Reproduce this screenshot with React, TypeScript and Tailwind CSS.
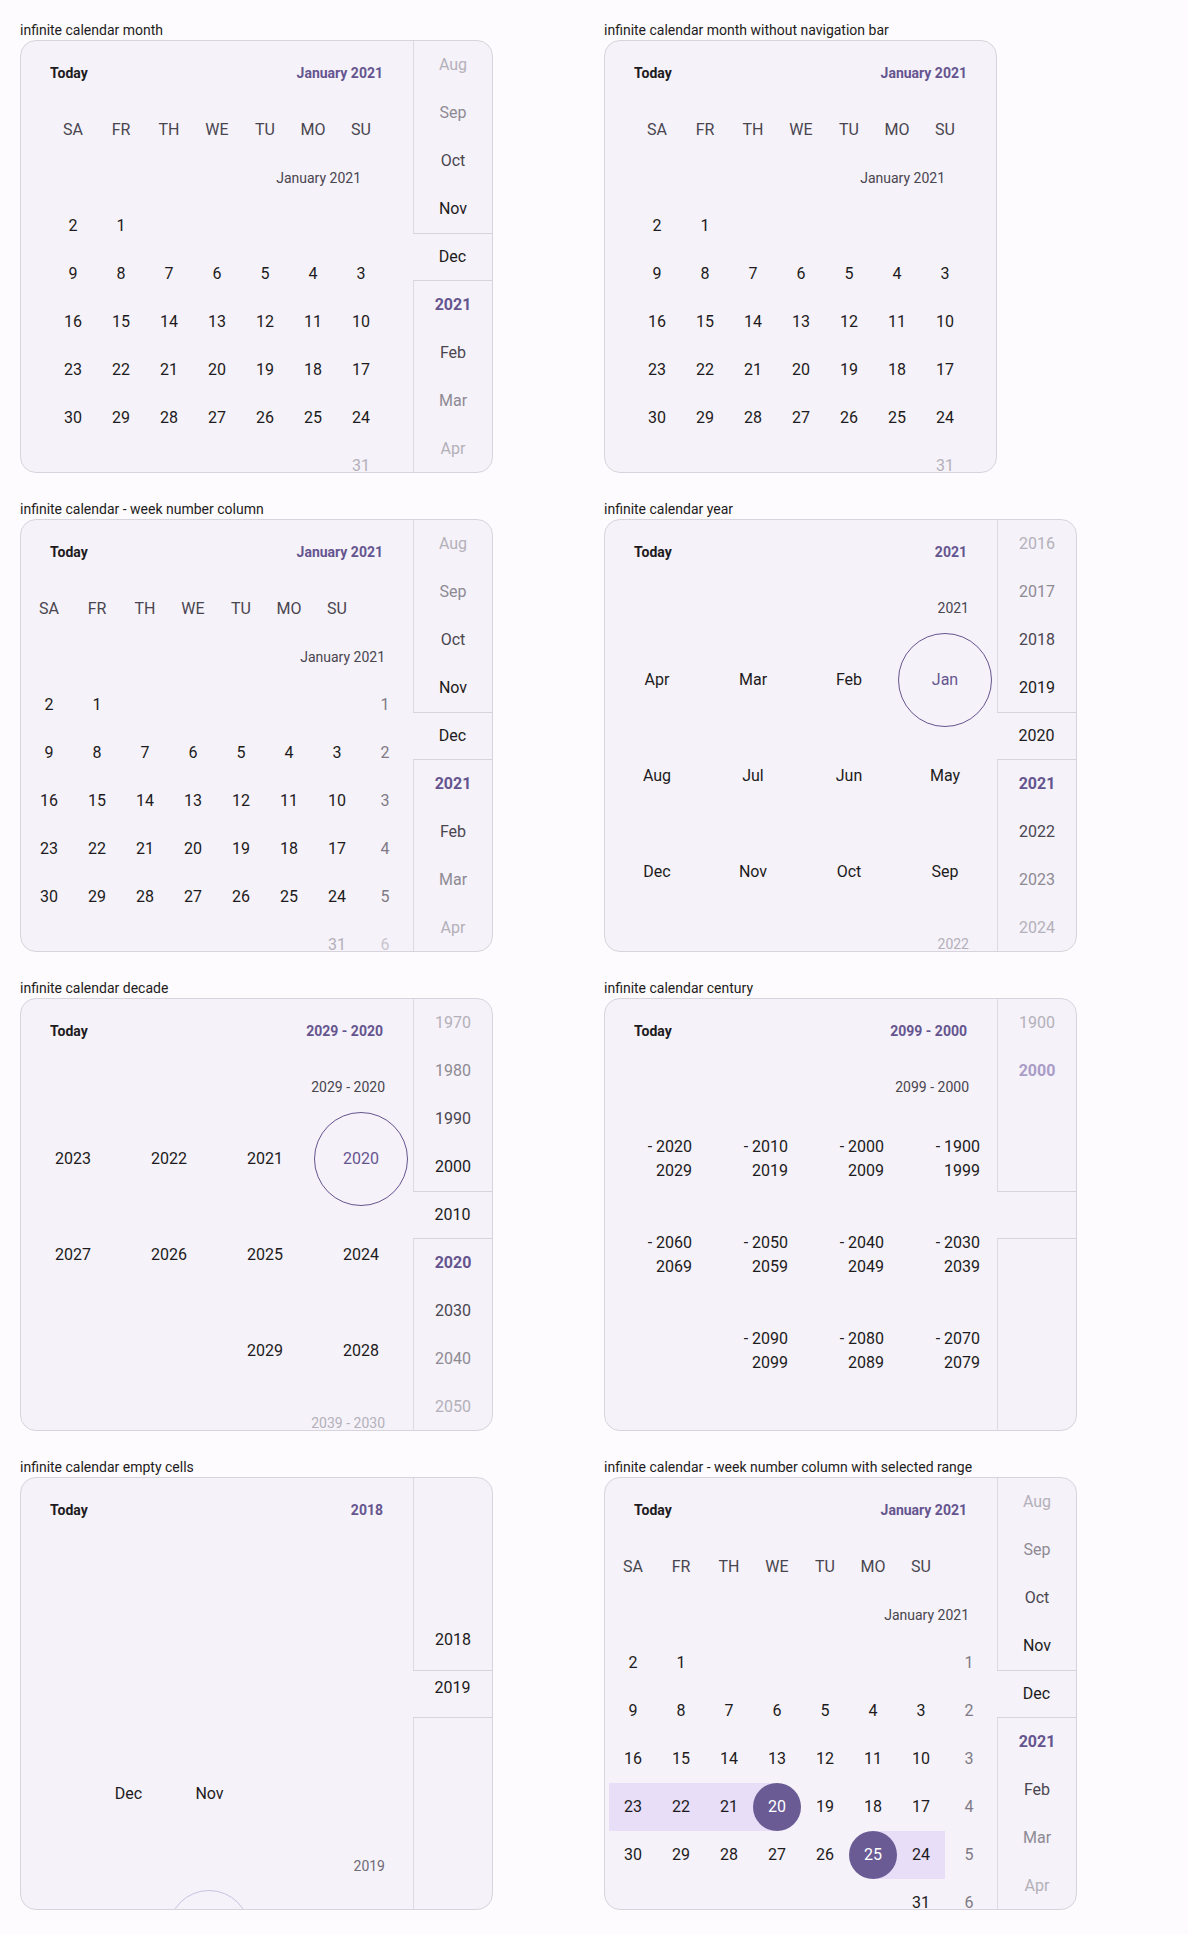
import React from 'react';

type Tone = 'l1' | 'l2' | 'l3' | 'd' | 'p' | 'pf' | 'none';
type NavItem = { label: string; tone: Tone };

const toneClass: Record<Tone, string> = {
  l1: 'text-[#b4b0b9]',
  l2: 'text-[#8e8a93]',
  l3: 'text-[#4a4650]',
  d: 'text-[#1d1b20]',
  p: 'text-[#65558f] font-bold',
  pf: 'text-[#a99cc7] font-bold',
  none: '',
};

function Nav({ items, highlight, shift }: { items: NavItem[]; highlight: number; shift?: boolean }) {
  return (
    <div className="flex w-[79px] shrink-0 flex-col">
      {items.map((it, i) => (
        <div
          key={i}
          className={
            'flex h-[48px] shrink-0 items-center justify-center text-[16px] ' +
            (i === highlight ? 'border-y border-[#d8d4dd] ' : 'border-l border-[#dedae3] ') +
            (shift ? 'pb-[12px] ' : '') +
            toneClass[it.tone]
          }
        >
          {it.label}
        </div>
      ))}
      <div className="flex-1 border-l border-[#dedae3]" />
    </div>
  );
}

function Card({ nav, children }: { nav?: React.ReactNode; children: React.ReactNode }) {
  return (
    <div
      className={
        'flex h-[433px] overflow-hidden rounded-2xl border border-[#d8d4dd] bg-[#f5f2f9] ' +
        (nav ? 'w-[473px]' : 'w-[393px]')
      }
    >
      <div className="flex w-[392px] shrink-0 flex-col">{children}</div>
      {nav}
    </div>
  );
}

function Header({ title }: { title: string }) {
  return (
    <div className="flex h-[64px] shrink-0 items-center justify-between pl-[29px] pr-[30px] text-[14px] font-bold">
      <span className="text-[#1d1b20]">Today</span>
      <span className="text-[#65558f]">{title}</span>
    </div>
  );
}

function Block({ title, children }: { title: string; children: React.ReactNode }) {
  return (
    <div>
      <div className="h-[20px] text-[14px] leading-[20px] text-[#1d1b20]">{title}</div>
      {children}
    </div>
  );
}

const monthNav: NavItem[] = [
  { label: 'Aug', tone: 'l1' },
  { label: 'Sep', tone: 'l2' },
  { label: 'Oct', tone: 'l3' },
  { label: 'Nov', tone: 'd' },
  { label: 'Dec', tone: 'd' },
  { label: '2021', tone: 'p' },
  { label: 'Feb', tone: 'l3' },
  { label: 'Mar', tone: 'l2' },
  { label: 'Apr', tone: 'l1' },
];

const yearNav: NavItem[] = [
  { label: '2016', tone: 'l1' },
  { label: '2017', tone: 'l2' },
  { label: '2018', tone: 'l3' },
  { label: '2019', tone: 'd' },
  { label: '2020', tone: 'd' },
  { label: '2021', tone: 'p' },
  { label: '2022', tone: 'l3' },
  { label: '2023', tone: 'l2' },
  { label: '2024', tone: 'l1' },
];

const decadeNav: NavItem[] = [
  { label: '1970', tone: 'l1' },
  { label: '1980', tone: 'l2' },
  { label: '1990', tone: 'l3' },
  { label: '2000', tone: 'd' },
  { label: '2010', tone: 'd' },
  { label: '2020', tone: 'p' },
  { label: '2030', tone: 'l3' },
  { label: '2040', tone: 'l2' },
  { label: '2050', tone: 'l1' },
];

const centuryNav: NavItem[] = [
  { label: '1900', tone: 'l1' },
  { label: '2000', tone: 'pf' },
  { label: '', tone: 'none' },
  { label: '', tone: 'none' },
  { label: '', tone: 'none' },
];

const emptyNav: NavItem[] = [
  { label: '', tone: 'none' },
  { label: '', tone: 'none' },
  { label: '', tone: 'none' },
  { label: '2018', tone: 'd' },
  { label: '2019', tone: 'd' },
];

const weekdays = ['SA', 'FR', 'TH', 'WE', 'TU', 'MO', 'SU'];

const dayRows: string[][] = [
  ['2', '1', '', '', '', '', ''],
  ['9', '8', '7', '6', '5', '4', '3'],
  ['16', '15', '14', '13', '12', '11', '10'],
  ['23', '22', '21', '20', '19', '18', '17'],
  ['30', '29', '28', '27', '26', '25', '24'],
];

type Band = 'none' | 'full' | 'left' | 'right';

function DayCell({ label, band = 'none', selected, className }: { label: string; band?: Band; selected?: boolean; className?: string }) {
  const bandClass =
    band === 'full'
      ? 'bg-[#e8def8]'
      : band === 'left'
        ? 'bg-[linear-gradient(90deg,#e8def8_50%,transparent_50%)]'
        : band === 'right'
          ? 'bg-[linear-gradient(90deg,transparent_50%,#e8def8_50%)]'
          : '';
  return (
    <div className={'flex h-[48px] w-[48px] items-center justify-center text-[16px] ' + bandClass}>
      {selected ? (
        <div className="flex h-[48px] w-[48px] items-center justify-center rounded-full bg-[#6b5b95] text-white">{label}</div>
      ) : (
        <span className={className ?? 'text-[#1d1b20]'}>{label}</span>
      )}
    </div>
  );
}

function MonthView({ weekCol, range, fadeLast }: { weekCol?: boolean; range?: boolean; fadeLast?: boolean }) {
  const lastDayClass = fadeLast ? 'text-[#b4b0b9]' : 'text-[#1d1b20]';
  const bandFor = (r: number, c: number): Band => {
    if (!range) return 'none';
    if (r === 3 && c < 3) return 'full';
    if (r === 3 && c === 3) return 'left';
    if (r === 4 && c === 6) return 'full';
    if (r === 4 && c === 5) return 'right';
    return 'none';
  };
  const isSel = (r: number, c: number) => !!range && ((r === 3 && c === 3) || (r === 4 && c === 5));
  return (
    <>
      <Header title="January 2021" />
      <div className="h-[1px] shrink-0" />
      <div className={'mx-auto ' + (weekCol ? 'w-[384px]' : 'w-[336px]')}>
        <div className="flex h-[48px]">
          {weekdays.map((d) => (
            <div key={d} className="flex h-[48px] w-[48px] items-center justify-center text-[16px] text-[#49454f]">
              {d}
            </div>
          ))}
        </div>
        <div className="flex h-[48px] items-center justify-end pr-[24px] text-[14px] text-[#49454f]">January 2021</div>
        {dayRows.map((row, r) => (
          <div key={r} className="flex h-[48px]">
            {row.map((d, c) => (
              <DayCell key={c} label={d} band={bandFor(r, c)} selected={isSel(r, c)} />
            ))}
            {weekCol && <DayCell label={String(r + 1)} className="text-[#7f7a85]" />}
          </div>
        ))}
        <div className="flex h-[48px]">
          {['', '', '', '', '', ''].map((d, c) => (
            <DayCell key={c} label={d} />
          ))}
          <DayCell label="31" className={lastDayClass} />
          {weekCol && <DayCell label="6" className={fadeLast ? 'text-[#c9c5ce]' : 'text-[#7f7a85]'} />}
        </div>
      </div>
    </>
  );
}

function BigCell({ children, selected }: { children?: React.ReactNode; selected?: boolean }) {
  return (
    <div className="flex h-[96px] w-[96px] items-center justify-center text-[16px] text-[#1d1b20]">
      {selected ? (
        <div className="flex h-[94px] w-[94px] items-center justify-center rounded-full border border-[#65558f] text-[#65558f]">
          {children}
        </div>
      ) : (
        children
      )}
    </div>
  );
}

function GridView({
  title,
  caption,
  rows,
  nextCaption,
}: {
  title: string;
  caption: string;
  rows: { label: React.ReactNode; selected?: boolean }[][];
  nextCaption: string;
}) {
  return (
    <>
      <Header title={title} />
      <div className="mx-auto w-[384px]">
        <div className="flex h-[48px] items-center justify-end pr-[24px] text-[14px] text-[#49454f]">{caption}</div>
        {rows.map((row, r) => (
          <div key={r} className="flex h-[96px]">
            {row.map((cell, c) => (
              <BigCell key={c} selected={cell.selected}>
                {cell.label}
              </BigCell>
            ))}
          </div>
        ))}
        <div className="flex h-[48px] items-center justify-end pr-[24px] text-[14px] text-[#b4b0b9]">{nextCaption}</div>
      </div>
    </>
  );
}

function Range({ a, b }: { a: string; b: string }) {
  return (
    <div className="flex h-[96px] w-[96px] flex-col items-end justify-center pr-[13px] text-[16px] leading-[24px] text-[#1d1b20]">
      <span>{a}</span>
      <span>{b}</span>
    </div>
  );
}

function CenturyView() {
  const rows: ([string, string] | null)[][] = [
    [
      ['- 2020', '2029'],
      ['- 2010', '2019'],
      ['- 2000', '2009'],
      ['- 1900', '1999'],
    ],
    [
      ['- 2060', '2069'],
      ['- 2050', '2059'],
      ['- 2040', '2049'],
      ['- 2030', '2039'],
    ],
    [null, ['- 2090', '2099'], ['- 2080', '2089'], ['- 2070', '2079']],
  ];
  return (
    <>
      <Header title="2099 - 2000" />
      <div className="mx-auto w-[384px]">
        <div className="flex h-[48px] items-center justify-end pr-[24px] text-[14px] text-[#49454f]">2099 - 2000</div>
        {rows.map((row, r) => (
          <div key={r} className="flex h-[96px]">
            {row.map((cell, c) =>
              cell ? <Range key={c} a={cell[0]} b={cell[1]} /> : <div key={c} className="h-[96px] w-[96px]" />,
            )}
          </div>
        ))}
      </div>
    </>
  );
}

function EmptyCellsView() {
  return (
    <>
      <Header title="2018" />
      <div className="h-[204px] shrink-0" />
      <div className="flex h-[96px] shrink-0 pl-[67px] text-[16px] text-[#1d1b20]">
        <div className="flex w-[81px] items-center justify-center">Dec</div>
        <div className="flex w-[81px] items-center justify-center">Nov</div>
      </div>
      <div className="flex h-[48px] shrink-0 items-center justify-end pr-[28px] text-[14px] text-[#6f6b75]">2019</div>
      <div className="flex shrink-0 pl-[147px]">
        <div className="h-[82px] w-[82px] rounded-full border border-[#c9c0e0]" />
      </div>
    </>
  );
}

const m = (label: string, selected?: boolean) => ({ label, selected });

export default function App() {
  return (
    <div className="min-h-[1934px] bg-[#fdfbfe] px-[20px] pt-[20px] font-['Roboto',sans-serif]">
      <div className="grid grid-cols-[584px_584px] gap-y-[26px]">
        <Block title="infinite calendar month">
          <Card nav={<Nav items={monthNav} highlight={4} />}>
            <MonthView fadeLast />
          </Card>
        </Block>
        <Block title="infinite calendar month without navigation bar">
          <Card>
            <MonthView fadeLast />
          </Card>
        </Block>
        <Block title="infinite calendar - week number column">
          <Card nav={<Nav items={monthNav} highlight={4} />}>
            <MonthView weekCol fadeLast />
          </Card>
        </Block>
        <Block title="infinite calendar year">
          <Card nav={<Nav items={yearNav} highlight={4} />}>
            <GridView
              title="2021"
              caption="2021"
              nextCaption="2022"
              rows={[
                [m('Apr'), m('Mar'), m('Feb'), m('Jan', true)],
                [m('Aug'), m('Jul'), m('Jun'), m('May')],
                [m('Dec'), m('Nov'), m('Oct'), m('Sep')],
              ]}
            />
          </Card>
        </Block>
        <Block title="infinite calendar decade">
          <Card nav={<Nav items={decadeNav} highlight={4} />}>
            <GridView
              title="2029 - 2020"
              caption="2029 - 2020"
              nextCaption="2039 - 2030"
              rows={[
                [m('2023'), m('2022'), m('2021'), m('2020', true)],
                [m('2027'), m('2026'), m('2025'), m('2024')],
                [m(''), m(''), m('2029'), m('2028')],
              ]}
            />
          </Card>
        </Block>
        <Block title="infinite calendar century">
          <Card nav={<Nav items={centuryNav} highlight={4} />}>
            <CenturyView />
          </Card>
        </Block>
        <Block title="infinite calendar empty cells">
          <Card nav={<Nav items={emptyNav} highlight={4} shift />}>
            <EmptyCellsView />
          </Card>
        </Block>
        <Block title="infinite calendar - week number column with selected range">
          <Card nav={<Nav items={monthNav} highlight={4} />}>
            <MonthView weekCol range />
          </Card>
        </Block>
      </div>
    </div>
  );
}
